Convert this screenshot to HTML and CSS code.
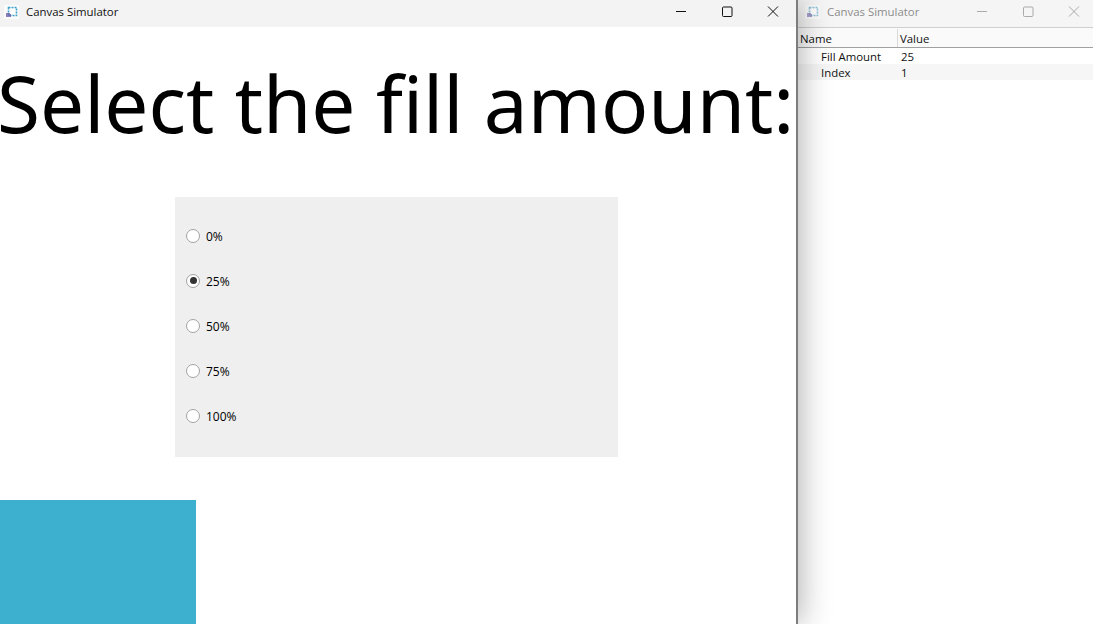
FILE: index.html
```html
<!DOCTYPE html>
<html lang="en">
<head>
<meta charset="UTF-8" />
<title>Canvas Simulator</title>
<link rel="stylesheet" href="styles.css">
</head>
<body>

<div class="desktop">
  <div class="window main-window">
    <div class="titlebar">
      <svg class="app-icon" width="15" height="14" viewBox="0 0 15 14">
        <rect width="15" height="14" fill="#fbfbfb"/>
        <rect x="4.5" y="2.5" width="8" height="8" fill="none" stroke="#3fa3c9" stroke-width="1.6" stroke-dasharray="2 1"/>
        <rect x="2" y="8" width="5" height="4" fill="#6a5aa8" opacity="0.75"/>
        <rect x="6" y="4" width="5" height="5" fill="#fff"/>
      </svg>
      <span class="title">Canvas Simulator</span>
      <div class="win-buttons">
        <svg width="46" height="24" viewBox="0 0 46 24"><path d="M18 11.5h10" stroke="#111" fill="none"/></svg>
        <svg width="46" height="24" viewBox="0 0 46 24"><rect x="18.5" y="7" width="9.5" height="9.5" rx="1" stroke="#111" fill="none"/></svg>
        <svg width="46" height="24" viewBox="0 0 46 24"><path d="M18 6.5l10 10M28 6.5l-10 10" stroke="#111" fill="none"/></svg>
      </div>
    </div>
    <div class="canvas">
      <h1>Select the fill amount:</h1>
      <div class="radio-panel">
        <label class="radio"><span class="dot"></span><span class="label">0%</span></label>
        <label class="radio"><span class="dot checked"></span><span class="label">25%</span></label>
        <label class="radio"><span class="dot"></span><span class="label">50%</span></label>
        <label class="radio"><span class="dot"></span><span class="label">75%</span></label>
        <label class="radio"><span class="dot"></span><span class="label">100%</span></label>
      </div>
      <div class="fill-bar"></div>
    </div>
  </div>

  <div class="window side-window">
    <div class="titlebar inactive">
      <svg class="app-icon" width="15" height="14" viewBox="0 0 15 14">
        <rect width="15" height="14" fill="#fbfbfb"/>
        <rect x="4.5" y="2.5" width="8" height="8" fill="none" stroke="#8fc4da" stroke-width="1.6" stroke-dasharray="2 1"/>
        <rect x="2" y="8" width="5" height="4" fill="#8f84bd" opacity="0.75"/>
        <rect x="6" y="4" width="5" height="5" fill="#fff"/>
      </svg>
      <span class="title">Canvas Simulator</span>
      <div class="win-buttons">
        <svg width="46" height="24" viewBox="0 0 46 24"><path d="M18 11.5h10" stroke="#aaa" fill="none"/></svg>
        <svg width="46" height="24" viewBox="0 0 46 24"><rect x="18.5" y="7" width="9.5" height="9.5" rx="1" stroke="#aaa" fill="none"/></svg>
        <svg width="46" height="24" viewBox="0 0 46 24"><path d="M18 6.5l10 10M28 6.5l-10 10" stroke="#aaa" fill="none"/></svg>
      </div>
    </div>
    <div class="prop-head">
      <div class="col-name">Name</div>
      <div class="col-value">Value</div>
    </div>
    <div class="prop-row">
      <div class="col-name">Fill Amount</div>
      <div class="col-value">25</div>
    </div>
    <div class="prop-row alt">
      <div class="col-name">Index</div>
      <div class="col-value">1</div>
    </div>
  </div>
</div>

</body>
</html>
```

FILE: styles.css
```css
html, body {
  margin: 0;
  height: 100%;
  overflow: hidden;
}

body {
  font-family: "Open Sans", "Noto Sans", sans-serif;
  font-size: 11.4px;
  color: #111;
  background: #fff;
}

.desktop {
  display: flex;
  height: 624px;
}

.window {
  display: flex;
  flex-direction: column;
  overflow: hidden;
}

.main-window {
  width: 796px;
  flex: none;
  border-right: 2px solid #7d7d7d;
  box-shadow: 2px 0 30px rgba(0,0,0,0.32);
  position: relative;
  z-index: 1;
  background: #fff;
}

.side-window {
  flex: 1;
  background: #fff;
}

.titlebar {
  display: flex;
  align-items: center;
  height: 27px;
  flex: none;
  box-sizing: border-box;
  padding: 0 0 3px 4px;
  background: #f3f3f3;
}

.titlebar .title {
  margin: 0 0 2px 7px;
}

.app-icon {
  flex: none;
}

.win-buttons {
  margin-left: auto;
  display: flex;
}

.win-buttons svg {
  display: block;
}

.inactive {
  height: 28px;
  background: #f5f5f5;
  border-bottom: 1px solid #d0d0d0;
  padding-left: 7px;
}

.inactive .win-buttons {
  margin-right: -4px;
}

.inactive .title {
  color: #8c8c8c;
}

.canvas {
  flex: 1;
  display: flex;
  flex-direction: column;
  align-items: flex-start;
}

h1 {
  margin: 0 0 0 -3px;
  font-family: "Noto Sans", "Open Sans", sans-serif;
  font-weight: 400;
  font-size: 78.3px;
  line-height: 152px;
  height: 170px;
  color: #000;
  white-space: nowrap;
}

.radio-panel {
  margin-left: 175px;
  width: 443px;
  height: 260px;
  background: #efefef;
  padding: 16px 0 19px 11px;
  box-sizing: border-box;
  display: flex;
  flex-direction: column;
}

.radio {
  display: flex;
  align-items: center;
  gap: 6px;
  height: 45px;
  font-size: 12px;
  color: #000;
}

.label {
  margin-top: 2px;
}

.dot {
  width: 14px;
  height: 14px;
  border: 1px solid #a3a3a3;
  border-radius: 50%;
  background: #fff;
  box-sizing: border-box;
  display: flex;
  align-items: center;
  justify-content: center;
}

.dot.checked::after {
  content: "";
  width: 7px;
  height: 7px;
  border-radius: 50%;
  background: #333;
}

.fill-bar {
  margin-top: 43px;
  width: 196px;
  height: 124px;
  background: #3cb0ce;
}

.prop-head {
  display: flex;
  height: 20px;
  flex: none;
  align-items: stretch;
  line-height: 20px;
  padding-top: 1px;
  border-bottom: 1px solid #a0a0a0;
  box-sizing: border-box;
  background: #fafafa;
}

.prop-head .col-name {
  width: 100px;
  padding-left: 2px;
  box-sizing: border-box;
  border-right: 1px solid #d8d8d8;
}

.prop-head .col-value {
  padding-left: 2px;
}

.prop-row {
  display: flex;
  height: 16px;
  flex: none;
  align-items: center;
}

.prop-row .col-name {
  width: 100px;
  padding-left: 23px;
  box-sizing: border-box;
}

.prop-row .col-value {
  padding-left: 3px;
}

.prop-row.alt {
  background: #f6f6f6;
}
```
